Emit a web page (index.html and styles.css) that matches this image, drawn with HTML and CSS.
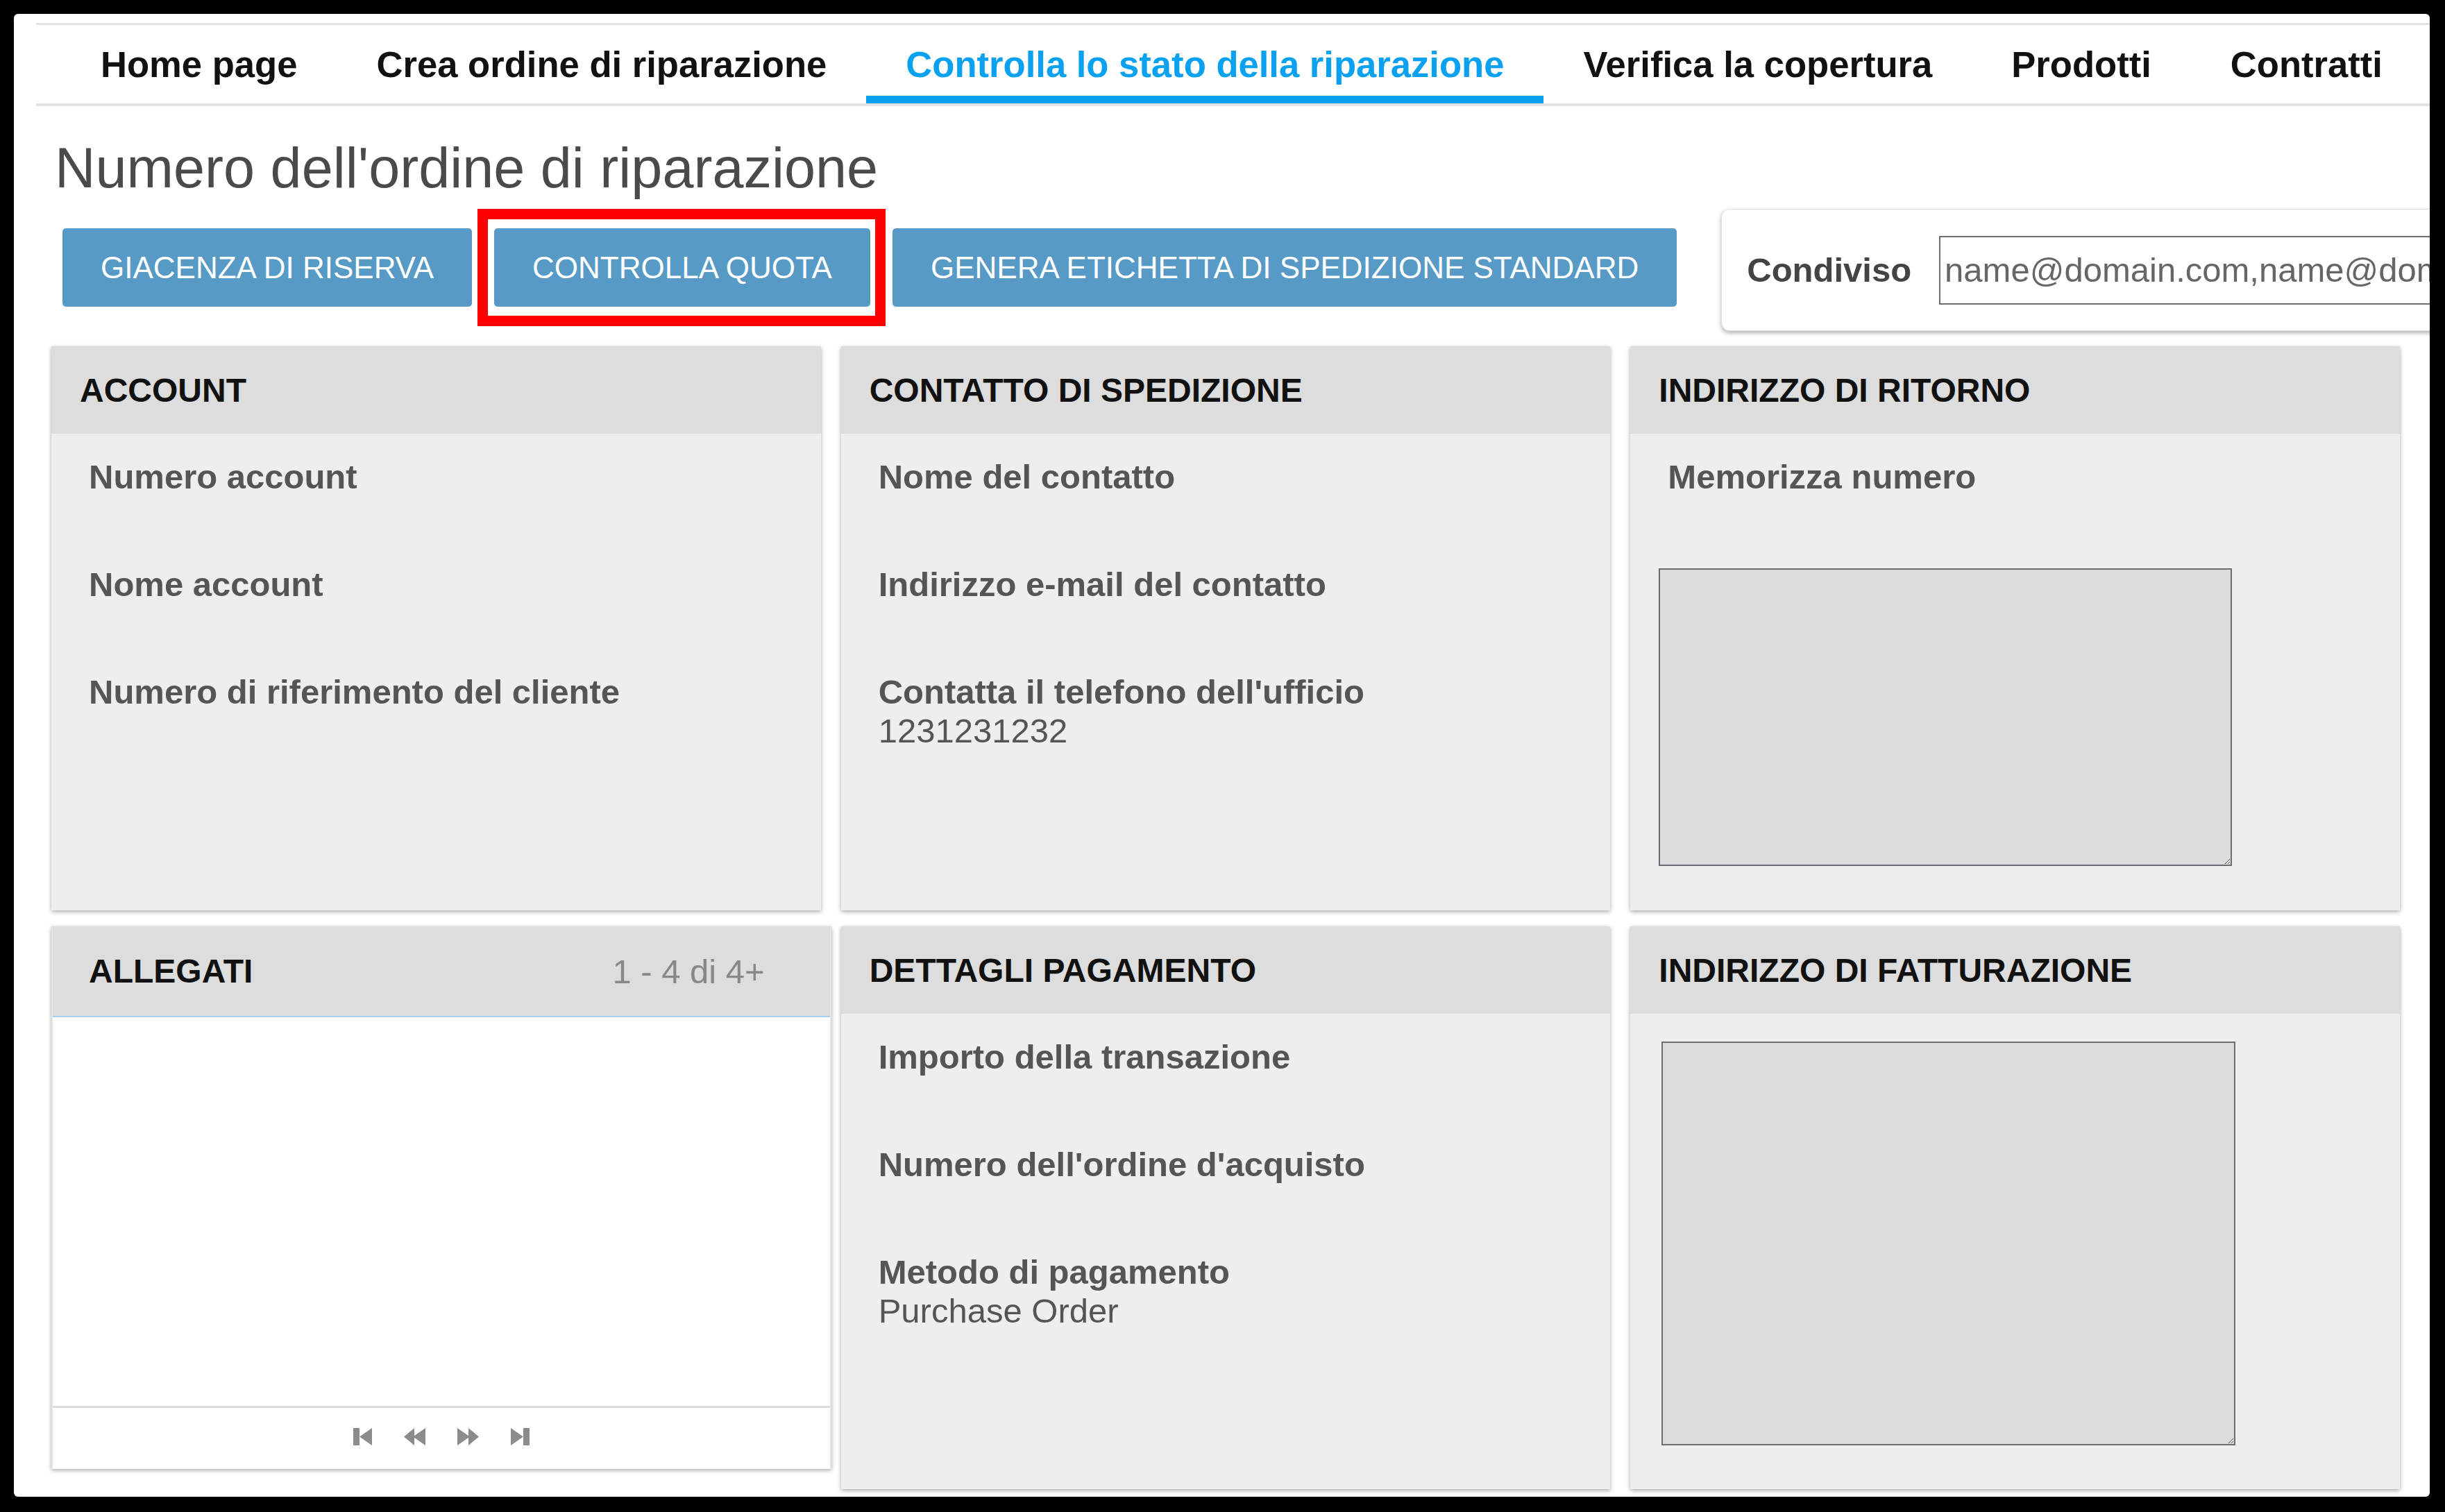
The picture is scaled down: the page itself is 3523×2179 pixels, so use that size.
FILE: index.html
```html
<!DOCTYPE html>
<html lang="it">
<head>
<meta charset="utf-8">
<title>Numero dell'ordine di riparazione</title>
<link rel="stylesheet" href="styles.css">
</head>
<body>
<div class="screen">
  <nav class="tabs">
    <a class="tab">Home page</a>
    <a class="tab">Crea ordine di riparazione</a>
    <a class="tab active">Controlla lo stato della riparazione</a>
    <a class="tab">Verifica la copertura</a>
    <a class="tab">Prodotti</a>
    <a class="tab">Contratti</a>
  </nav>

  <h1 class="title">Numero dell'ordine di riparazione</h1>

  <div class="toolbar">
    <button class="btn">GIACENZA DI RISERVA</button>
    <span class="highlight"><button class="btn">CONTROLLA QUOTA</button></span>
    <button class="btn">GENERA ETICHETTA DI SPEDIZIONE STANDARD</button>
    <div class="share">
      <span class="share-label">Condiviso</span>
      <input class="share-input" type="text" value="name@domain.com,name@domain.com">
    </div>
  </div>

  <div class="grid">
    <section class="panel">
      <header class="panel-head">ACCOUNT</header>
      <div class="panel-body">
        <div class="field"><div class="label">Numero account</div><div class="value"></div></div>
        <div class="field"><div class="label">Nome account</div><div class="value"></div></div>
        <div class="field"><div class="label">Numero di riferimento del cliente</div><div class="value"></div></div>
      </div>
    </section>

    <section class="panel">
      <header class="panel-head">CONTATTO DI SPEDIZIONE</header>
      <div class="panel-body">
        <div class="field"><div class="label">Nome del contatto</div><div class="value"></div></div>
        <div class="field"><div class="label">Indirizzo e-mail del contatto</div><div class="value"></div></div>
        <div class="field"><div class="label">Contatta il telefono dell'ufficio</div><div class="value">1231231232</div></div>
      </div>
    </section>

    <section class="panel">
      <header class="panel-head">INDIRIZZO DI RITORNO</header>
      <div class="panel-body">
        <div class="field field-store"><div class="label">Memorizza numero</div><div class="value"></div></div>
        <textarea class="address address-return"></textarea>
      </div>
    </section>

    <section class="panel panel-attach">
      <header class="panel-head attach-head">
        <span>ALLEGATI</span>
        <span class="count">1 - 4 di 4+</span>
      </header>
      <div class="attach-body"></div>
      <div class="pager">
        <svg class="pg" width="27" height="25" viewBox="0 0 27 25"><rect x="0" y="0" width="9" height="25"/><polygon points="27,0 9,12.5 27,25"/></svg>
        <svg class="pg" width="31" height="25" viewBox="0 0 31 25"><polygon points="0,12.5 15,0 15,25"/><polygon points="13,12.5 31,0 31,25"/></svg>
        <svg class="pg" width="31" height="25" viewBox="0 0 31 25"><polygon points="0,0 18,12.5 0,25"/><polygon points="16,0 31,12.5 16,25"/></svg>
        <svg class="pg" width="27" height="25" viewBox="0 0 27 25"><polygon points="0,0 18,12.5 0,25"/><rect x="18" y="0" width="9" height="25"/></svg>
      </div>
    </section>

    <section class="panel">
      <header class="panel-head">DETTAGLI PAGAMENTO</header>
      <div class="panel-body">
        <div class="field"><div class="label">Importo della transazione</div><div class="value"></div></div>
        <div class="field"><div class="label">Numero dell'ordine d'acquisto</div><div class="value"></div></div>
        <div class="field"><div class="label">Metodo di pagamento</div><div class="value">Purchase Order</div></div>
      </div>
    </section>

    <section class="panel">
      <header class="panel-head">INDIRIZZO DI FATTURAZIONE</header>
      <div class="panel-body body-billing">
        <textarea class="address address-billing"></textarea>
      </div>
    </section>
  </div>
</div>
</body>
</html>
```

FILE: styles.css
```css
* { box-sizing: border-box; }

html, body {
  margin: 0;
  padding: 0;
  background: #000;
  font-family: "Liberation Sans", Arial, sans-serif;
}

.screen {
  margin: 20px 22px 22px 20px;
  height: 2137px;
  background: #fff;
  overflow: hidden;
  border-radius: 6px;
}

/* ---------- tabs ---------- */
.tabs {
  display: flex;
  margin: 13px 0 0 32px;
  padding-left: 36px;
  border-top: 3px solid #e3e3e3;
  border-bottom: 4px solid #e3e3e3;
}

.tab {
  padding: 11px 57px 0;
  line-height: 91px;
  border-bottom: 11px solid transparent;
  font-size: 52.6px;
  font-weight: bold;
  color: #111;
  white-space: nowrap;
}

.tab.active {
  color: #0aa2f0;
  border-bottom-color: #0aa2f0;
}

/* ---------- title ---------- */
.title {
  margin: 41px 0 0 59px;
  font-size: 81px;
  line-height: 97px;
  font-weight: normal;
  color: #4a4a4a;
}

/* ---------- toolbar ---------- */
.toolbar {
  display: flex;
  align-items: flex-start;
  gap: 32px;
  margin-top: 10px;
  padding-left: 70px;
  height: 176px;
}

.btn {
  margin-top: 28px;
  height: 113px;
  padding: 0 55px;
  border: 0;
  border-radius: 5px;
  background: #589ac6;
  color: #fff;
  font-family: "Liberation Sans", Arial, sans-serif;
  font-size: 44px;
  white-space: nowrap;
}

.highlight {
  position: relative;
  display: flex;
}

.highlight::after {
  content: "";
  position: absolute;
  top: 0;
  bottom: -28px;
  left: -24px;
  right: -22px;
  border: 15px solid #ff0000;
  pointer-events: none;
}

.share {
  display: flex;
  align-items: center;
  gap: 40px;
  margin-left: 32px;
  height: 176px;
  padding-left: 36px;
  background: #fff;
  border: 1px solid #e0e0e0;
  border-radius: 12px;
  box-shadow: 0 3px 6px rgba(0, 0, 0, 0.3);
  flex-shrink: 0;
}

.share-label {
  font-size: 49px;
  font-weight: bold;
  color: #444;
}

.share-input {
  width: 1000px;
  height: 99px;
  padding: 0 6px;
  border: 2px solid #6f6f6f;
  font-family: "Liberation Sans", Arial, sans-serif;
  font-size: 49px;
  color: #666;
  background: #fff;
}

/* ---------- panels ---------- */
.grid {
  display: grid;
  grid-template-columns: repeat(3, 1fr);
  grid-template-rows: 813px 811px;
  column-gap: 29px;
  row-gap: 23px;
  margin-top: 22px;
  padding: 0 43px 0 54px;
}

.panel {
  background: #eeeeee;
  box-shadow: 0 2px 6px rgba(0, 0, 0, 0.35);
  display: flex;
  flex-direction: column;
}

.panel-head {
  height: 126px;
  flex-shrink: 0;
  display: flex;
  align-items: center;
  padding-left: 41px;
  background: #dddddd;
  font-size: 48px;
  font-weight: bold;
  color: #111;
}

.panel-body {
  padding: 34px 54px 0;
}

.field {
  margin-bottom: 43px;
}

.label {
  font-size: 49px;
  line-height: 56px;
  font-weight: bold;
  color: #555;
}

.value {
  min-height: 56px;
  font-size: 49px;
  line-height: 56px;
  color: #555;
}

.field-store {
  margin-bottom: 48px;
}

.address {
  display: block;
  margin-left: -13px;
  border: 2px solid #6a6c71;
  background: #dcdcdc;
  font-family: "Liberation Sans", Arial, sans-serif;
}

.address-return {
  width: 826px;
  height: 429px;
}

.body-billing {
  padding: 40px 0 0 45px;
}

.body-billing .address {
  margin-left: 0;
}

.address-billing {
  width: 827px;
  height: 582px;
}

/* ---------- attachments ---------- */
.panel-attach {
  align-self: start;
  height: 782px;
  margin-right: -15px;
  background: #fff;
  border-left: 2px solid #e4e4e4;
  border-right: 2px solid #e4e4e4;
}

.attach-head {
  height: 131px;
  justify-content: space-between;
  padding: 0 94px 0 52px;
  border-bottom: 2px solid #a9cfee;
}

.count {
  font-weight: normal;
  font-size: 49px;
  color: #888;
}

.attach-body {
  flex: 1;
  background: #fff;
}

.pager {
  height: 91px;
  flex-shrink: 0;
  border-top: 3px solid #dedede;
  display: flex;
  align-items: center;
  justify-content: center;
  gap: 46px;
  padding-bottom: 6px;
}

.pg {
  fill: #8c8c8c;
}
```
